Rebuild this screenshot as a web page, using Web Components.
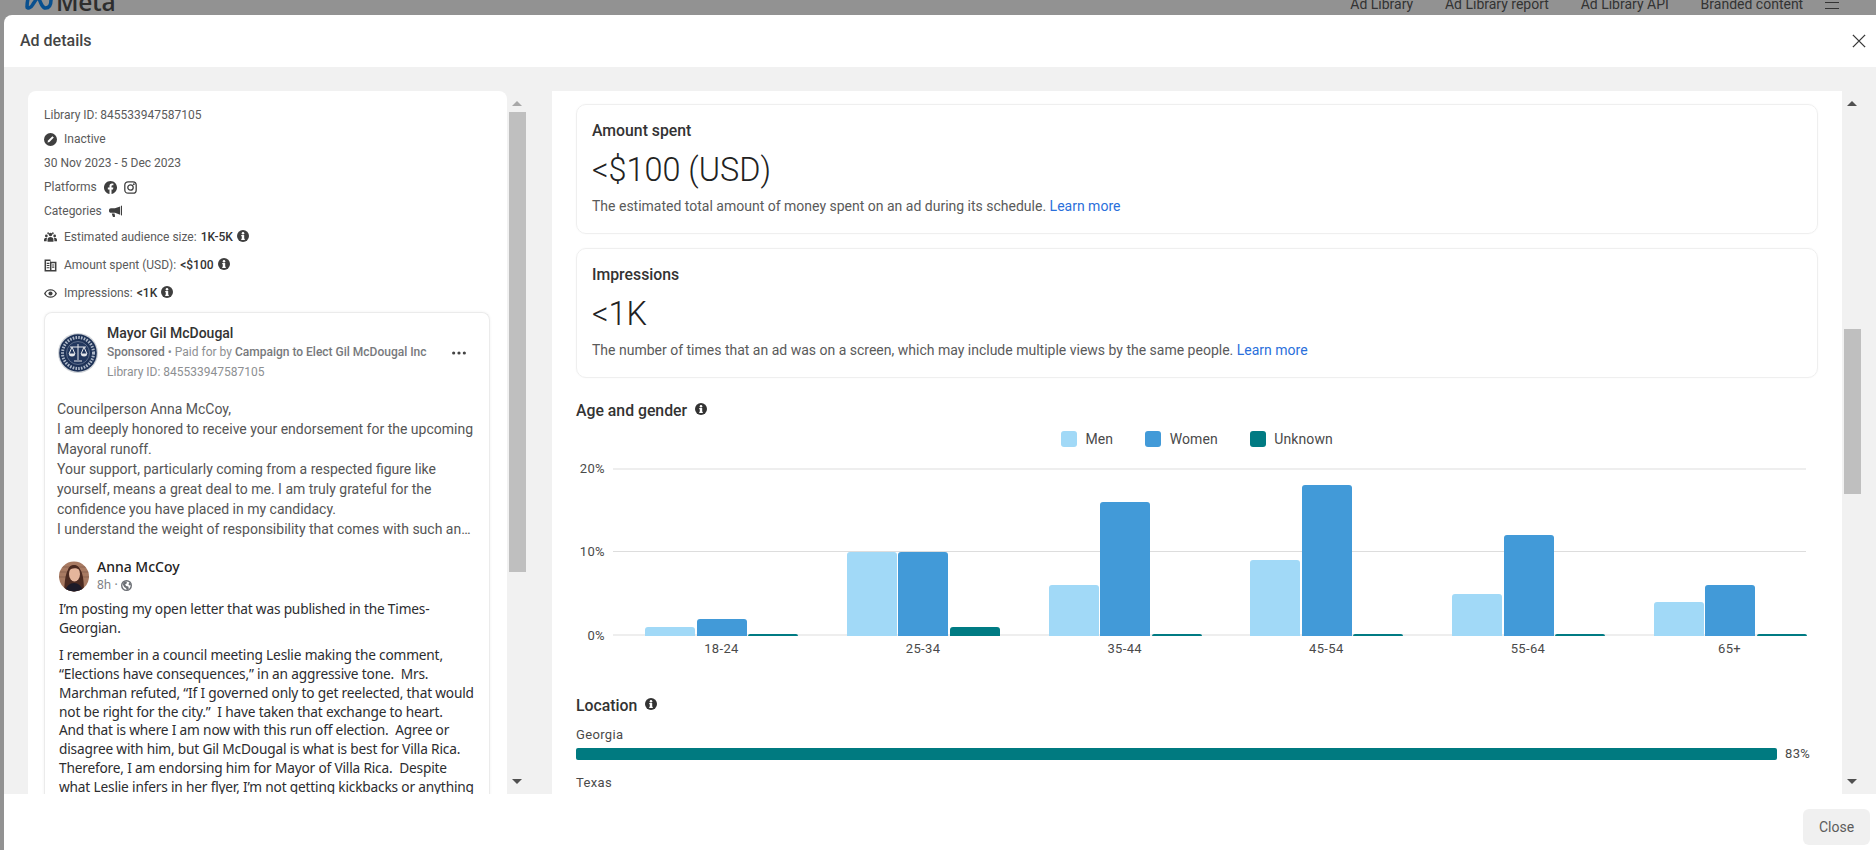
<!DOCTYPE html>
<html lang="en"><head><meta charset="utf-8"><title>Ad details</title>
<style>
html,body{margin:0;padding:0;height:100%;overflow:hidden;background:#929292;font-family:Roboto,"Liberation Sans",sans-serif;color:#444}
</style></head>
<body>
<ad-page>
  <top-bar slot="behind"></top-bar>
  <ad-modal heading="Ad details">
    <ad-pane slot="left" width="479" thumb-top="21" thumb-height="460" arrow="#a8a8a8"><ad-summary></ad-summary></ad-pane>
    <ad-pane slot="right" width="1290" thumb-top="238" thumb-height="165" arrow="#505050" panel="1">
      <stat-card>
        <span slot="title">Amount spent</span><span slot="value">&lt;$100 (USD)</span>
        <span slot="desc">The estimated total amount of money spent on an ad during its schedule.</span>
      </stat-card>
      <stat-card>
        <span slot="title">Impressions</span><span slot="value">&lt;1K</span>
        <span slot="desc">The number of times that an ad was on a screen, which may include multiple views by the same people.</span>
      </stat-card>
      <age-chart></age-chart>
      <location-list></location-list>
    </ad-pane>
  </ad-modal>
</ad-page>
<script>
const ICONS={
 info:'<circle cx="12" cy="12" r="12" fill="currentColor"/><rect x="9.6" y="10.2" width="4.8" height="9.6" rx="1" fill="#fff"/><rect x="8.4" y="10.2" width="4" height="2.2" fill="#fff"/><rect x="8.4" y="17.6" width="7.2" height="2.2" fill="#fff"/><circle cx="12" cy="6.4" r="2.5" fill="#fff"/>',
 inactive:'<circle cx="12" cy="12" r="12" fill="currentColor"/><path d="M6.5 17.5l1-3.6 8-8 2.6 2.6-8 8z" fill="#fff"/>',
 facebook:'<path fill="currentColor" d="M24 12.073c0-6.627-5.373-12-12-12s-12 5.373-12 12c0 5.99 4.388 10.954 10.125 11.854v-8.385H7.078v-3.47h3.047V9.43c0-3.007 1.792-4.669 4.533-4.669 1.312 0 2.686.235 2.686.235v2.953H15.83c-1.491 0-1.956.925-1.956 1.874v2.25h3.328l-.532 3.47h-2.796v8.385C19.612 23.027 24 18.062 24 12.073z"/>',
 instagram:'<rect x="1.5" y="1.5" width="21" height="21" rx="6" fill="none" stroke="currentColor" stroke-width="2.4"/><circle cx="12" cy="12" r="5" fill="none" stroke="currentColor" stroke-width="2.4"/><circle cx="18.2" cy="5.8" r="1.6" fill="currentColor"/>',
 megaphone:'<path fill="currentColor" d="M24 1v18.5l-2-.8V1.8zM20.5 2.6v15.2L11 14.5H3.5C1.5 14.5 0 12.9 0 11V9.5C0 7.6 1.5 6 3.5 6H11zM5 15.5h5.2l1 5.3c.1.7-.4 1.2-1 1.2H8c-.5 0-1-.4-1.100-.9z"/>',
 people:'<circle cx="12" cy="6.500" r="3.300" fill="currentColor"/><circle cx="4.300" cy="9" r="2.500" fill="currentColor"/><circle cx="19.700" cy="9" r="2.500" fill="currentColor"/><circle cx="7.700" cy="4" r="1.800" fill="currentColor" opacity=".9"/><circle cx="16.300" cy="4" r="1.800" fill="currentColor" opacity=".9"/><path fill="currentColor" d="M6.500 20v-3.800c0-3 2.400-5 5.500-5s5.500 2 5.500 5V20zM0 19v-3c0-2 1.800-3.500 4.300-3.500.6 0 1 .1 1.500.2-.6 1-.9 2-.9 3.200V19zM24 19v-3c0-2-1.800-3.500-4.300-3.500-.6 0-1 .1-1.500.2.600 1 .9 2 .9 3.200V19z"/>',
 ledger:'<path fill="currentColor" d="M1 1h11v4h11v18H1zm2.800 2.800v16.400H11V3.800zM13.800 7.800v12.400h6.400V7.800z"/><path fill="currentColor" d="M5 7h5v2H5zM5 11h5v2H5zM5 15h5v2H5zM15 10h4v2h-4zM15 14h4v2h-4z"/>',
 eye:'<path fill="currentColor" fill-rule="evenodd" d="M12 4C6.500 4 2 7.600 0 12c2 4.400 6.500 8 12 8s10-3.600 12-8c-2-4.400-6.500-8-12-8zm0 13.500A8.600 8.600 0 0 1 3 12a8.600 8.600 0 0 1 9-5.500 8.600 8.600 0 0 1 9 5.500 8.600 8.600 0 0 1-9 5.500z"/><circle cx="12" cy="12" r="3.800" fill="currentColor"/>',
 globe:'<circle cx="12" cy="12" r="10.500" fill="none" stroke="currentColor" stroke-width="3"/><path fill="currentColor" d="M6 3l7 1-1 4-3 1 2 4 5 1 1 5-4 4-2-5-4-3-3-5zM19 5l3 6-3 1-3-3z"/>',
 dots:'<circle cx="4" cy="12" r="2.400" fill="currentColor"/><circle cx="12" cy="12" r="2.400" fill="currentColor"/><circle cx="20" cy="12" r="2.400" fill="currentColor"/>',
 close:'<path d="M1.500 1.500l21 21M22.500 1.500l-21 21" stroke="currentColor" stroke-width="2.300" fill="none"/>'
};
function comp(tag,html,setup){
  customElements.define(tag,class extends HTMLElement{
    constructor(){super();this.attachShadow({mode:'open'});}
    connectedCallback(){
      this.shadowRoot.innerHTML=typeof html==='function'?html(this):html;
      if(setup)setup(this);
    }
  });
}
comp('ad-icon',el=>{
  const s=el.getAttribute('size')||12;
  return `<style>:host{display:inline-flex;flex:none;width:${s}px;height:${s}px}svg{display:block;width:100%;height:100%}</style><svg viewBox="0 0 24 24" aria-hidden="true">${ICONS[el.getAttribute('name')]}</svg>`;
});
comp('ad-page',`<style>
:host{display:block;position:relative;width:100%;height:850px;overflow:hidden;background:#929292}
.modal{position:absolute;left:4px;top:15px;right:0;bottom:0;display:flex}
.modal ::slotted(*){flex:1}
</style><slot name="behind"></slot><div class="modal"><slot></slot></div>`);
comp('top-bar',`<style>
:host{display:flex;align-items:flex-end;justify-content:space-between;height:9px;padding:0 37px 0 25px;color:#333;font-size:14px}
.logo{display:flex;align-items:flex-end;gap:3px;color:#2e2e2e}
svg{display:block;flex:none}
.word{font-size:24.500px;line-height:29px;font-weight:600;font-family:"Open Sans",Roboto,sans-serif;margin-bottom:-7px;letter-spacing:-.3px}
nav{display:flex;align-items:flex-end;gap:31.800px;line-height:16px;margin-bottom:-3px}
.ham{display:flex;flex-direction:column;gap:5px;width:14px;margin-left:-10px;margin-bottom:3px}
.ham i{display:block;height:1px;background:#333}
</style>
<div class="logo"><svg width="28" height="22" viewBox="0 0 28 22" style="margin-bottom:-1px"><path d="M2 19c0-8 3-16 6.500-16 5 0 6.500 17 12 17 3.500 0 5.500-3 5.500-8 0-5-2.500-9-6-9-4 0-8.500 8-12.500 14C6 20 2 21 2 19z" fill="none" stroke="#09508f" stroke-width="3.500"/></svg><span class="word">Meta</span></div>
<nav><span>Ad Library</span><span>Ad Library report</span><span>Ad Library API</span><span>Branded content</span><div class="ham"><i></i><i></i></div></nav>`);
comp('ad-modal',el=>`<style>
:host{display:flex;flex-direction:column;background:#fff;border-radius:8px 0 0 0;overflow:hidden}
header{flex:none;height:52px;display:flex;align-items:center;justify-content:space-between;padding:0 10px 0 16px}
h1{margin:0;font-size:16px;line-height:20px;font-weight:500;color:#444}
.body{flex:1;min-height:0;background:#f1f1f1;padding:24px 0 0 24px;display:flex;gap:25px}
footer{flex:none;height:56px;display:flex;align-items:flex-start;justify-content:flex-end;padding:15px 6px 0 0;box-sizing:border-box}
button{all:unset;width:67px;height:36px;background:#f0f0f0;border-radius:6px;font-size:14px;color:#5c5c5c;text-align:center;line-height:34px}
ad-icon{color:#3a3a3a}
</style>
<header><h1>${el.getAttribute('heading')}</h1><ad-icon name="close" size="14"></ad-icon></header>
<div class="body"><slot name="left"></slot><slot name="right"></slot></div>
<footer><button>Close</button></footer>`);
comp('ad-pane',el=>{
  const panel=el.hasAttribute('panel');
  return `<style>
:host{display:flex;flex:none;min-height:0}
.view{width:${el.getAttribute('width')}px;box-sizing:border-box;background:#fff;overflow:hidden;${panel?'padding:13px 24px 0':'border-radius:8px 8px 0 0'}}
.sb{width:20px;position:relative}
.up,.down{position:absolute;left:5px;width:0;height:0;border-left:5px solid transparent;border-right:5px solid transparent}
.up{top:10px;border-bottom:5px solid ${el.getAttribute('arrow')}}
.down{bottom:10px;border-top:5px solid #505050}
.thumb{position:absolute;left:2px;width:17px;top:${el.getAttribute('thumb-top')}px;height:${el.getAttribute('thumb-height')}px;background:#bfbfbf}
</style><div class="view"><slot></slot></div><div class="sb"><i class="up"></i><i class="thumb"></i><i class="down"></i></div>`;
});
comp('ad-summary',`<style>
:host{display:block;padding:12px 17px 0 16px;font-size:12px;color:#5a5a5a}
.r{display:flex;align-items:center;height:24px;white-space:nowrap}
.r.t{height:28px}
ad-icon{color:#3f3f3f}
.lead{margin-right:7px}
.p{margin-left:7px}
b{font-weight:500;color:#333;margin-left:4px}
.i{margin-left:4px;margin-bottom:2px}
ad-preview{margin-top:5px}
</style>
<div class="r">Library ID: 845533947587105</div>
<div class="r"><ad-icon class="lead" name="inactive" size="13"></ad-icon>Inactive</div>
<div class="r">30 Nov 2023 - 5 Dec 2023</div>
<div class="r">Platforms<ad-icon class="p" name="facebook" size="13"></ad-icon><ad-icon class="p" name="instagram" size="13"></ad-icon></div>
<div class="r">Categories<ad-icon class="p" name="megaphone" size="13"></ad-icon></div>
<div class="r t"><ad-icon class="lead" name="people" size="13"></ad-icon>Estimated audience size:<b>1K-5K</b><ad-icon class="i" name="info"></ad-icon></div>
<div class="r t"><ad-icon class="lead" name="ledger" size="13"></ad-icon>Amount spent (USD):<b>&lt;$100</b><ad-icon class="i" name="info"></ad-icon></div>
<div class="r t"><ad-icon class="lead" name="eye" size="13"></ad-icon>Impressions:<b>&lt;1K</b><ad-icon class="i" name="info"></ad-icon></div>
<ad-preview></ad-preview>`);
comp('ad-preview',`<style>
:host{display:block;border:1px solid #ebebeb;border-bottom:0;border-radius:8px 8px 0 0;padding:10px 12px 0;box-shadow:0 0 3px rgba(0,0,0,.06);height:600px;box-sizing:border-box}
.h{display:flex;align-items:center;padding-left:1px}
.seal{display:block;flex:none;margin-right:9px}
.meta{flex:1;font-size:12px;color:#8d8f92}
.n{font-size:14px;line-height:20px;font-weight:500;color:#333}
.s{line-height:19px;white-space:nowrap;color:#8d8f92}
.s b{font-weight:500;color:#77797c}
.l{line-height:20px}
.d{margin-right:10px;color:#444}
.txt{margin-top:17px;font-size:14px;line-height:20px;color:#555;white-space:nowrap}
post-shot{margin:19px 0 0 2px}
</style>
<div class="h">
<svg class="seal" width="40" height="40" viewBox="0 0 40 40"><circle cx="20" cy="20" r="20" fill="#cfd3d8"/><circle cx="20" cy="20" r="18.800" fill="#1d3156"/><circle cx="20" cy="20" r="15.500" fill="none" stroke="#aeb8c8" stroke-width="3" stroke-dasharray="1.600 1.200"/><circle cx="20" cy="20" r="11.500" fill="#22375e" stroke="#8692a8" stroke-width=".6"/><path d="M20 11v16M12 14h16M14 14l-3 7h6zM26 14l-3 7h6zM16 28h8" fill="none" stroke="#e4e6ea" stroke-width="1"/><path d="M11 21a3 2.500 0 0 0 6 0zM23 21a3 2.500 0 0 0 6 0z" fill="#e4e6ea"/></svg>
<div class="meta"><div class="n">Mayor Gil McDougal</div><div class="s"><b>Sponsored</b> • Paid for by <b>Campaign to Elect Gil McDougal Inc</b></div><div class="l">Library ID: 845533947587105</div></div>
<ad-icon class="d" name="dots" size="16"></ad-icon>
</div>
<div class="txt">Councilperson Anna McCoy,<br>I am deeply honored to receive your endorsement for the upcoming<br>Mayoral runoff.<br>Your support, particularly coming from a respected figure like<br>yourself, means a great deal to me. I am truly grateful for the<br>confidence you have placed in my candidacy.<br>I understand the weight of responsibility that comes with such an…</div>
<post-shot></post-shot>`);
comp('post-shot',`<style>
:host{display:block;font-family:"Noto Sans","Open Sans",sans-serif;color:#2c2d30}
.h{display:flex;align-items:center;gap:8px}
svg.a{display:block;flex:none}
.n{font-size:14px;line-height:18px;font-weight:500;color:#222}
.m{font-size:12px;line-height:18px;color:#7d8085;display:flex;align-items:center;gap:3px}
ad-icon{color:#6d7076}
p{margin:0;font-size:13.700px;letter-spacing:-.18px;line-height:18.900px;white-space:nowrap}
.a1{margin-top:6px}
.a2{margin-top:8px}
</style>
<div class="h">
<svg class="a" width="30" height="31" viewBox="0 0 30 31"><defs><clipPath id="c"><circle cx="15" cy="15.500" r="15"/></clipPath></defs><g clip-path="url(#c)"><rect width="30" height="31" fill="#a87a62"/><path d="M0 6h30M0 11h30M0 16h30" stroke="#8d6450" stroke-width="1"/><path d="M5 31C6 20 6 6 15 4c9 2 10 14 10 27z" fill="#4b2a21"/><ellipse cx="15.500" cy="13" rx="5.500" ry="7.500" fill="#e4b59c"/><path d="M9 10c3-3 8-4 12-1-1-4-4-5-6-5-4 0-6 3-6 6z" fill="#4b2a21"/><path d="M6 31c1-6 5-9 9-9s8 3 9 9z" fill="#1c1a28"/></g></svg>
<div><div class="n">Anna McCoy</div><div class="m">8h ·<ad-icon name="globe" size="11"></ad-icon></div></div>
</div>
<p class="a1">I’m posting my open letter that was published in the Times-<br>Georgian.</p>
<p class="a2">I remember in a council meeting Leslie making the comment,<br>“Elections have consequences,” in an aggressive tone.&nbsp; Mrs.<br>Marchman refuted, “If I governed only to get reelected, that would<br>not be right for the city.”&nbsp; I have taken that exchange to heart.<br>And that is where I am now with this run off election.&nbsp; Agree or<br>disagree with him, but Gil McDougal is what is best for Villa Rica.<br>Therefore, I am endorsing him for Mayor of Villa Rica.&nbsp; Despite<br>what Leslie infers in her flyer, I’m not getting kickbacks or anything</p>`);
comp('stat-card',`<style>
:host{display:block;box-sizing:border-box;height:130px;border:1px solid #efefef;border-radius:10px;padding:15px 15px 0;margin-bottom:13.500px;box-shadow:0 0 2px rgba(0,0,0,.04)}
.t{font-size:15.800px;line-height:22px;font-weight:500;color:#333}
.v{margin-top:8px;font-size:32.400px;line-height:40px;font-weight:300;color:#222}
.d{margin-top:6px;font-size:14px;line-height:20px;color:#5a5a5a;white-space:nowrap}
a{color:#2a6fdb;text-decoration:none}
</style><div class="t"><slot name="title"></slot></div><div class="v"><slot name="value"></slot></div><div class="d"><slot name="desc"></slot> <a>Learn more</a></div>`);
comp('age-chart',()=>{
  const data=[['18-24',1,2,.2],['25-34',10,10,1],['35-44',6,16,.2],['45-54',9,18,.2],['55-64',5,12,.2],['65+',4,6,.2]];
  const groups=data.map(d=>`<div class="g"><i style="height:${d[1]*8.35}px;background:#a1d9f7"></i><i style="height:${d[2]*8.35}px;background:#429ad8"></i><i style="height:${d[3]*8.35}px;background:#007b83"></i></div>`).join('');
  const labels=data.map(d=>`<span>${d[0]}</span>`).join('');
  return `<style>
:host{display:block;margin-top:23px;font-size:13px;letter-spacing:.35px;color:#4a4a4a}
h2{margin:0;display:flex;align-items:center;gap:8px;font-size:15.800px;line-height:20px;font-weight:500;color:#333;letter-spacing:0}
h2 ad-icon{margin-bottom:3px;color:#333}
.legend{display:flex;margin:10px 0 0 485px;height:16px;line-height:16px;font-size:14px;letter-spacing:.1px}
.legend span{display:flex;align-items:center;gap:8.500px;margin-right:32px}
.legend i{display:block;width:16px;height:16px;border-radius:3px}
.row{display:flex;margin-top:14px}
.ticks{width:29px;height:183px;display:flex;flex-direction:column;justify-content:space-between;text-align:right;line-height:16px;margin-right:8px}
.col{flex:none;width:1193px;margin-top:7px}
.plot{position:relative;height:168px;display:flex;align-items:flex-end;gap:48.800px;padding-left:32px;box-sizing:border-box}
.line{position:absolute;left:0;right:0}
.g{position:relative;display:flex;align-items:flex-end;gap:1.500px;width:153px}
.g i{display:block;width:50px;border-radius:3px 3px 0 0}
.x{display:flex;gap:48.800px;padding-left:32px;margin-top:5px;line-height:16px}
.x span{width:153px;text-align:center}
</style>
<h2>Age and gender<ad-icon name="info"></ad-icon></h2>
<div class="legend"><span><i style="background:#a1d9f7"></i>Men</span><span><i style="background:#429ad8"></i>Women</span><span><i style="background:#007b83"></i>Unknown</span></div>
<div class="row"><div class="ticks"><span>20%</span><span>10%</span><span>0%</span></div>
<div class="col"><div class="plot"><div class="line" style="top:0;height:2px;background:#eee"></div><div class="line" style="top:83px;height:1px;background:#ddd"></div><div class="line" style="bottom:0;height:2px;background:#eee"></div>${groups}</div><div class="x">${labels}</div></div></div>`;
});
comp('location-list',`<style>
:host{display:block;margin-top:39px;font-size:13px;letter-spacing:.35px;color:#4a4a4a}
h2{margin:0;display:flex;align-items:center;gap:8px;font-size:15.800px;line-height:20px;font-weight:500;color:#333;letter-spacing:0}
h2 ad-icon{margin-bottom:3px;color:#333}
.l{line-height:18px}
.a{margin-top:10px}
.b{margin-top:14px}
.bar{display:flex;align-items:center;gap:8px;height:12px;margin-top:4px}
.bar i{display:block;width:1201px;height:12px;border-radius:2px;background:#007a80}
</style>
<h2>Location<ad-icon name="info"></ad-icon></h2>
<div class="l a">Georgia</div>
<div class="bar"><i></i><span>83%</span></div>
<div class="l b">Texas</div>`);
</script>
</body></html>
